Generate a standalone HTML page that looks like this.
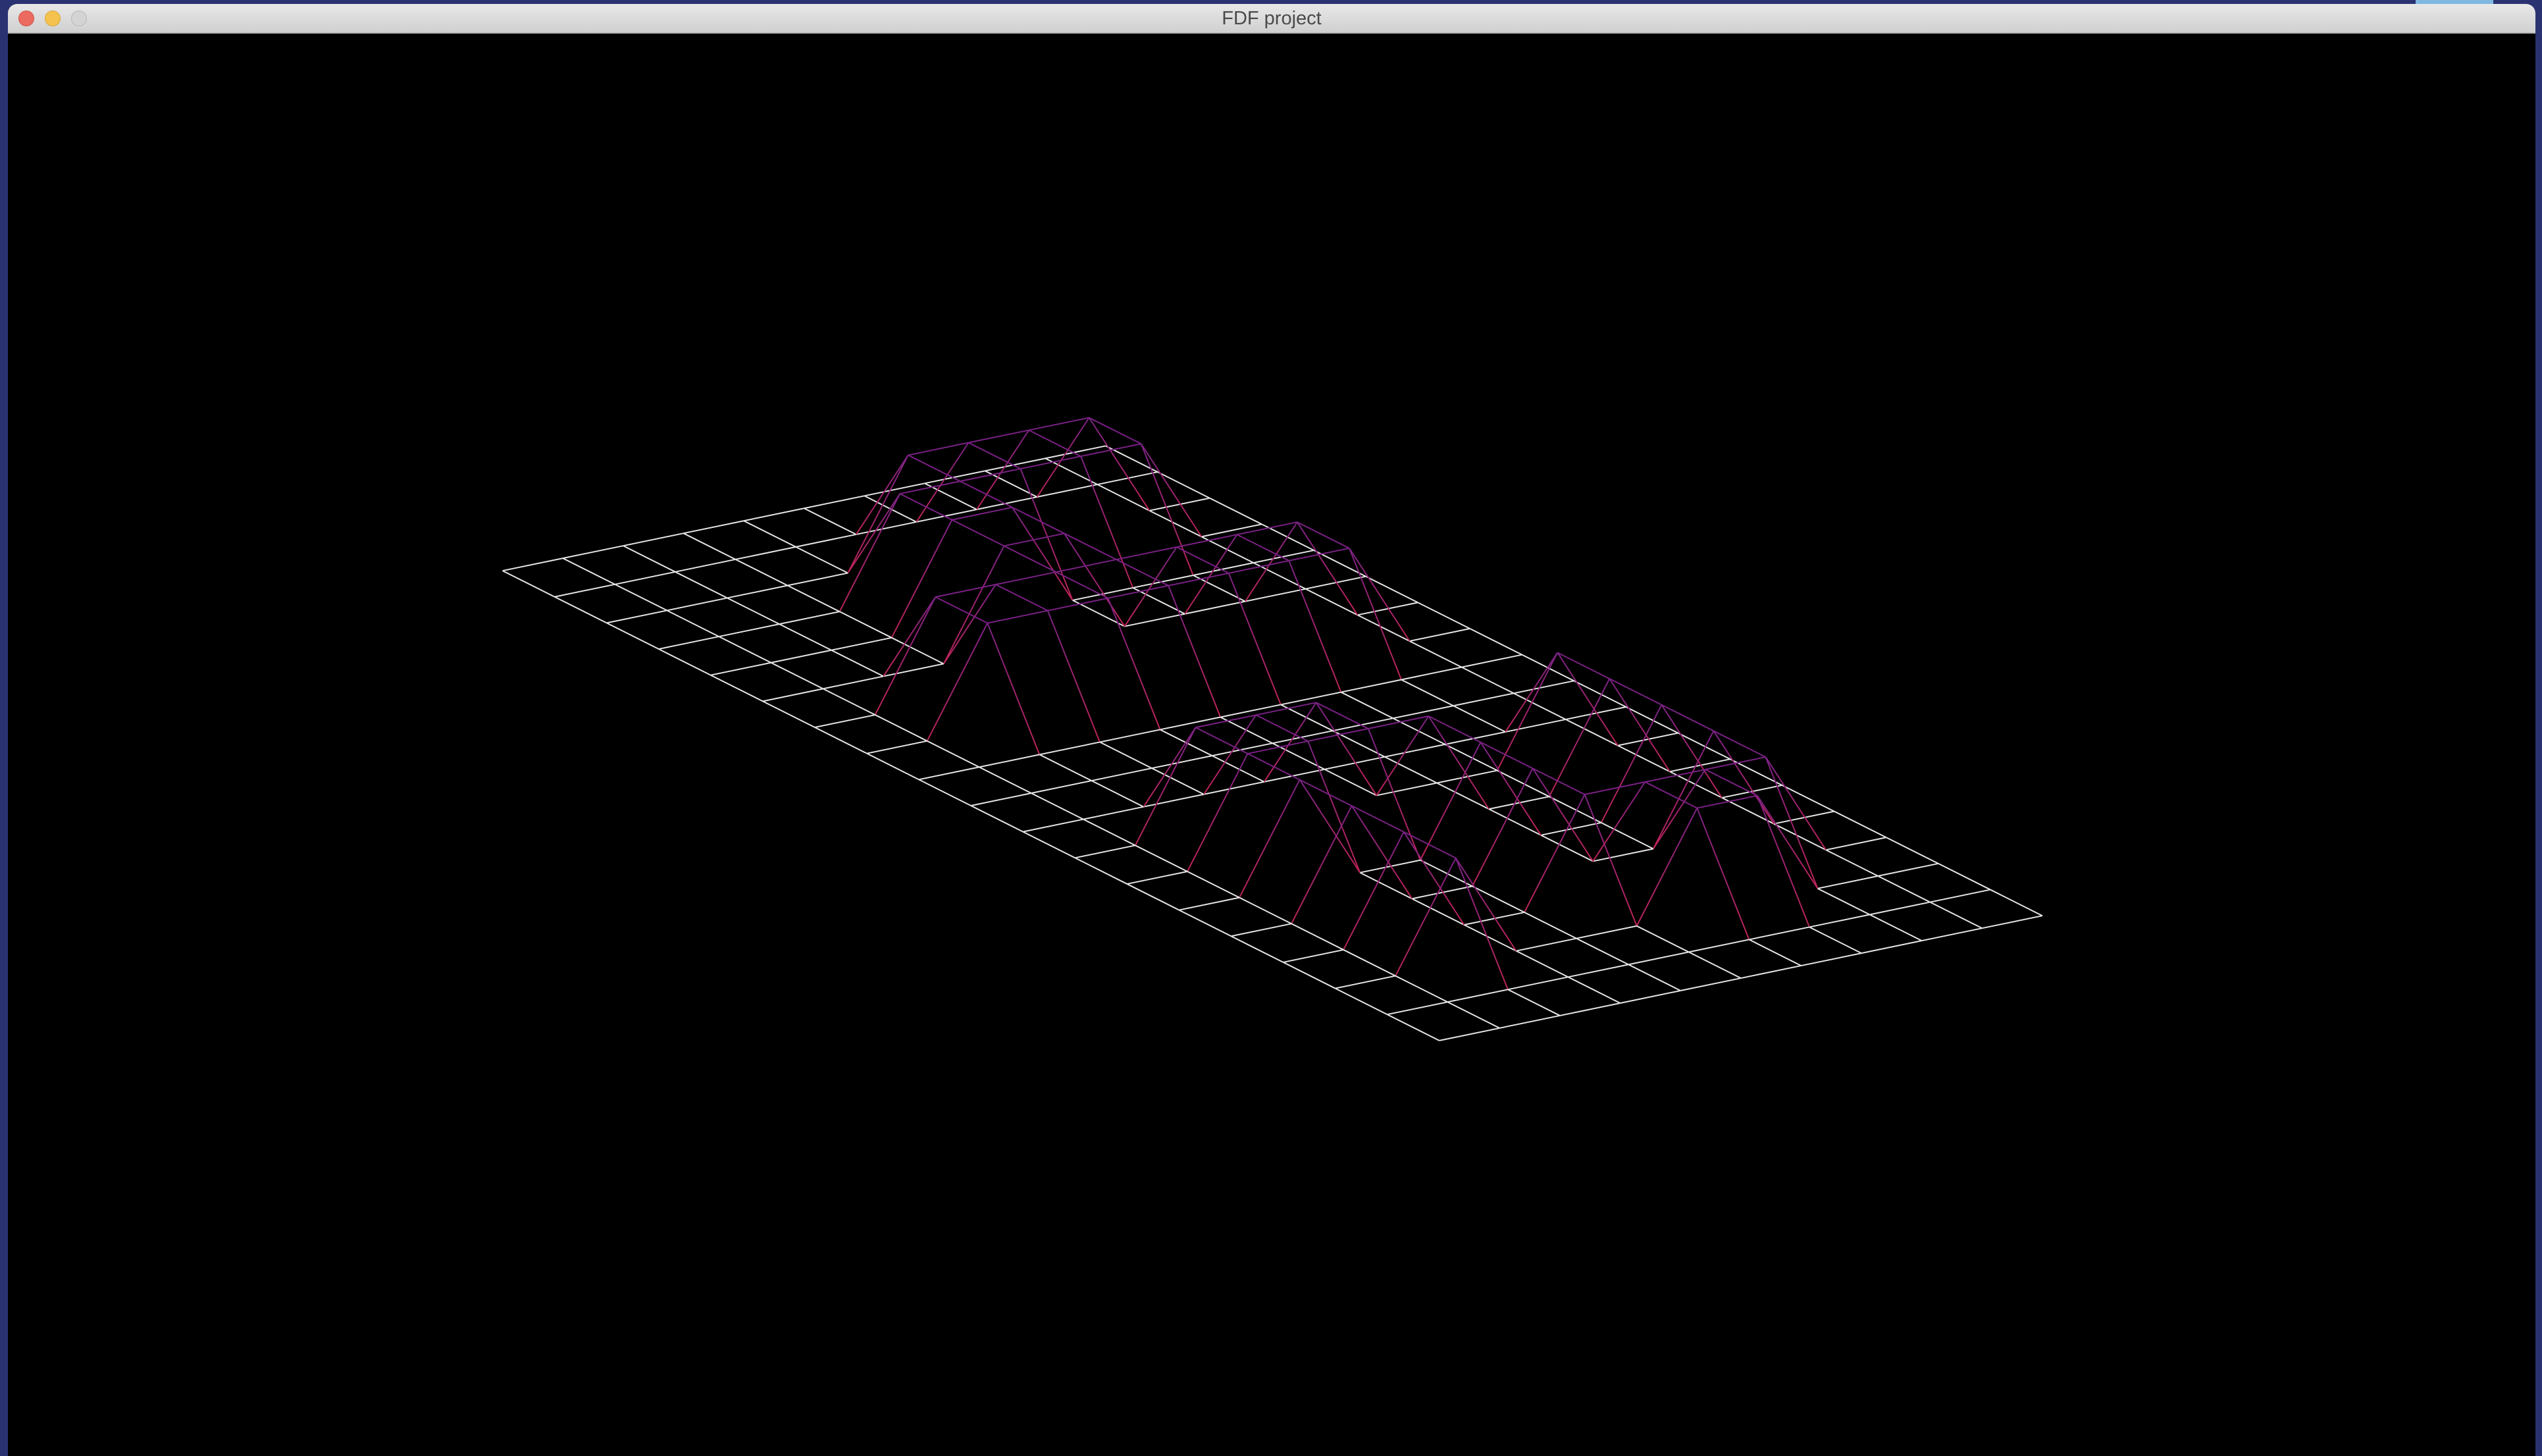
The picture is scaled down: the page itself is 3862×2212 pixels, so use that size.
<!DOCTYPE html>
<html><head><meta charset="utf-8">
<style>
html,body{margin:0;padding:0;width:3862px;height:2212px;overflow:hidden;background:#2b3272;}
#win{position:absolute;left:12px;top:6px;width:3840px;height:2206px;background:#000;border-radius:14px 14px 0 0;overflow:hidden;}
#tb{position:absolute;left:0;top:0;width:100%;height:43px;background:linear-gradient(#e8e8e8,#d0d0d0);border-bottom:2px solid #b8b8b8;}
.dot{position:absolute;top:10px;width:22px;height:22px;border-radius:50%;}
#title{position:absolute;left:0;width:100%;top:6px;text-align:center;font:29px "Liberation Sans",sans-serif;color:#4a4a4a;}
#blue{position:absolute;left:3670px;top:0;width:118px;height:6px;background:#7fb8e0;}
svg{position:absolute;left:0;top:0;}
</style></head><body>
<div id="blue"></div>
<div id="win">
<div id="tb">
<div class="dot" style="left:16px;background:#ec6b60;border:1px solid #d05248"></div>
<div class="dot" style="left:56px;background:#f5c24f;border:1px solid #d9a53a"></div>
<div class="dot" style="left:96px;background:#d4d4d4;border:1px solid #b8b8b8"></div>
<div id="title">FDF project</div>
</div>
</div>
<svg id="s" width="3862" height="2212" viewBox="0 0 1568 898"></svg>
<script>
var M=[
"0 0 0 0 0 0 0 0 0 0 0 0 0 0 0 0 0 0 0",
"0 0 0 0 0 0 0 0 0 0 0 0 0 0 0 0 0 0 0",
"0 0 10 10 0 0 10 10 0 0 0 10 10 10 10 10 0 0 0",
"0 0 10 10 0 0 10 10 0 0 0 0 0 0 0 10 10 0 0",
"0 0 10 10 0 0 10 10 0 0 0 0 0 0 0 10 10 0 0",
"0 0 10 10 10 10 10 10 0 0 0 0 10 10 10 10 0 0 0",
"0 0 0 10 10 10 10 10 0 0 0 10 10 0 0 0 0 0 0",
"0 0 0 0 0 0 10 10 0 0 0 10 10 0 0 0 0 0 0",
"0 0 0 0 0 0 10 10 0 0 0 10 10 10 10 10 10 0 0",
"0 0 0 0 0 0 0 0 0 0 0 0 0 0 0 0 0 0 0",
"0 0 0 0 0 0 0 0 0 0 0 0 0 0 0 0 0 0 0"].map(function(r){return r.split(/\s+/).map(Number);});
function P(c,r){var b=10-r,z=M[r][c];return [310+32.1*c+37.2*b+0.0*z,352+16.1*c-7.7*b-6.5*z,z];}
var ns="http://www.w3.org/2000/svg",s=document.getElementById('s');
var defs=document.createElementNS(ns,'defs');s.appendChild(defs);var gi=0;
function L(a,b){
 var l=document.createElementNS(ns,'line');
 l.setAttribute('x1',a[0]);l.setAttribute('y1',a[1]);l.setAttribute('x2',b[0]);l.setAttribute('y2',b[1]);
 l.setAttribute('stroke-width','0.8');
 if(a[2]==0&&b[2]==0)l.setAttribute('stroke','#e6e6e6');
 else if(a[2]&&b[2])l.setAttribute('stroke','#7a2084');
 else{
  var lo=a[2]?b:a,hi=a[2]?a:b;
  var g=document.createElementNS(ns,'linearGradient');g.id='g'+(gi++);
  g.setAttribute('gradientUnits','userSpaceOnUse');
  g.setAttribute('x1',lo[0]);g.setAttribute('y1',lo[1]);g.setAttribute('x2',hi[0]);g.setAttribute('y2',hi[1]);
  g.innerHTML='<stop offset="0" stop-color="#c0245a"/><stop offset="1" stop-color="#7c2286"/>';
  defs.appendChild(g);l.setAttribute('stroke','url(#'+g.id+')');
 }
 s.appendChild(l);
}
for(var r=0;r<11;r++)for(var c=0;c<19;c++){
 if(c<18)L(P(c,r),P(c+1,r));
 if(r<10)L(P(c,r),P(c,r+1));
}
</script>
</body></html>
